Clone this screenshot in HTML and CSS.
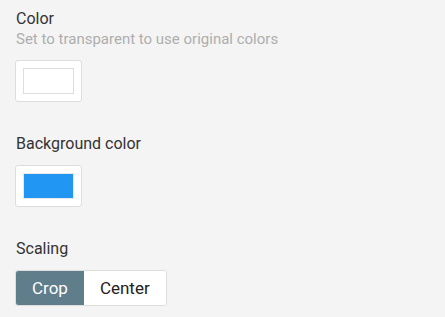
FILE: index.html
```html
<!DOCTYPE html>
<html lang="en">
<head>
  <meta charset="UTF-8">
  <title>Widget settings</title>
  <link rel="stylesheet" href="styles.css">
</head>
<body>
  <div class="settings">
    <!-- Foreground color -->
    <div class="field">
      <label class="field-label">Color</label>
      <div class="field-hint">Set to transparent to use original colors</div>
      <button class="swatch" type="button"><span class="swatch-fill swatch-white"></span></button>
    </div>

    <!-- Background color -->
    <div class="field">
      <label class="field-label">Background color</label>
      <button class="swatch" type="button"><span class="swatch-fill swatch-blue"></span></button>
    </div>

    <!-- Scaling -->
    <div class="field">
      <label class="field-label">Scaling</label>
      <div class="segmented">
        <button class="segment active" type="button">Crop</button>
        <button class="segment" type="button">Center</button>
      </div>
    </div>
  </div>
</body>
</html>
```

FILE: styles.css
```css
body {
  margin: 0;
  background: #f4f4f4;
  font-family: Roboto, "Liberation Sans", sans-serif;
  color: #333;
}

.settings {
  padding: 8px 16px 0;
}

/* Field blocks */
.field {
  display: flex;
  flex-direction: column;
  align-items: flex-start;
  margin-bottom: 31px;
}

.field:last-child {
  margin-bottom: 0;
}

.field-label {
  font-size: 16px;
  line-height: 21px;
  font-weight: 400;
  color: #333;
  margin-bottom: 11px;
}

.field-label + .field-hint {
  margin-top: -10px;
}

.field-hint {
  font-size: 15px;
  line-height: 18px;
  color: #aeaeae;
  margin-bottom: 12px;
}

/* Color swatch button */
.swatch {
  display: block;
  margin: 0 0 0 -1px;
  padding: 7px;
  background: #fff;
  border: 1px solid #ddd;
  border-radius: 3px;
  cursor: pointer;
}

.swatch-fill {
  display: block;
  width: 49px;
  height: 24px;
  border: 1px solid #ddd;
}

.swatch-white {
  background: #fff;
}

.swatch-blue {
  background: #2196f3;
  border-color: #e8e8e8;
}

/* Segmented control */
.segmented {
  display: flex;
  margin-left: -1px;
  border: 1px solid #ddd;
  border-radius: 3px;
  overflow: hidden;
  background: #fff;
}

.segment {
  height: 34px;
  padding: 0 16px;
  border: none;
  background: #fff;
  font-family: inherit;
  font-size: 17px;
  color: #222;
  cursor: pointer;
}

.segment.active {
  background: #607d8b;
  color: #fff;
}
```
